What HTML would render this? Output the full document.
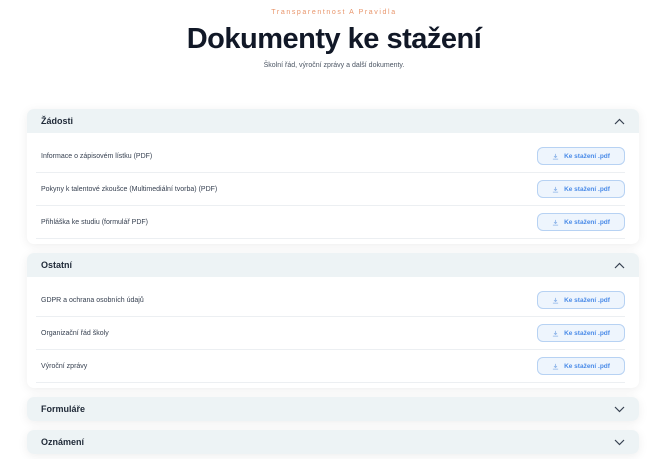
<!DOCTYPE html>
<html><head><meta charset="utf-8"><style>
*{margin:0;padding:0;box-sizing:border-box}
body{width:668px;height:459px;background:#fff;font-family:"Liberation Sans",sans-serif;position:relative;overflow:hidden;color:#1f2937}
.top{position:absolute;top:9px;width:100%;text-align:center;font-size:7px;letter-spacing:1.6px;color:#e8956b}
h1{position:absolute;top:23px;width:100%;text-align:center;font-size:29px;font-weight:bold;color:#111827;letter-spacing:-0.5px}
.sub{position:absolute;top:62px;width:100%;text-align:center;font-size:7px;color:#4b5563}
.card{position:absolute;left:27px;width:612px;border-radius:7px;background:#fff;box-shadow:0 2px 10px rgba(0,0,0,0.07);overflow:hidden}
.hd{height:24px;background:#edf3f5;display:flex;align-items:center;justify-content:space-between;padding:0 14px 0 14px;font-size:9px;font-weight:bold;color:#1f2937}
.hd svg{width:11px;height:7px}
.body{padding:7px 14px 6px 9px}
.row{height:33px;border-bottom:1px solid #eceff2;display:flex;align-items:center;justify-content:space-between;padding-left:5px;font-size:7px;color:#374151}
.btn{width:88px;height:18px;border:1px solid #b7d2f3;background:#eef5fd;border-radius:6px;display:flex;align-items:center;justify-content:center;font-size:6.5px;font-weight:bold;color:#4a8be8;margin-right:0}
.btn svg{width:7px;height:7px;margin-right:5px}
</style></head><body>
<div class="top">Transparentnost A Pravidla</div>
<h1>Dokumenty ke stažení</h1>
<div class="sub">Školní řád, výroční zprávy a další dokumenty.</div>

<div class="card" style="top:109px;height:135px">
<div class="hd">Žádosti<svg viewBox="0 0 11 7"><path d="M1 6L5.5 1.5L10 6" fill="none" stroke="#374151" stroke-width="1.2"/></svg></div>
<div class="body">
<div class="row">Informace o zápisovém lístku (PDF)<span class="btn"><svg viewBox="0 0 8 8"><path d="M4 1v4M2.3 3.5L4 5.2 5.7 3.5M1 7h6" fill="none" stroke="#8bb3e8" stroke-width="0.9"/></svg>Ke stažení .pdf</span></div>
<div class="row">Pokyny k talentové zkoušce (Multimediální tvorba) (PDF)<span class="btn"><svg viewBox="0 0 8 8"><path d="M4 1v4M2.3 3.5L4 5.2 5.7 3.5M1 7h6" fill="none" stroke="#8bb3e8" stroke-width="0.9"/></svg>Ke stažení .pdf</span></div>
<div class="row">Přihláška ke studiu (formulář PDF)<span class="btn"><svg viewBox="0 0 8 8"><path d="M4 1v4M2.3 3.5L4 5.2 5.7 3.5M1 7h6" fill="none" stroke="#8bb3e8" stroke-width="0.9"/></svg>Ke stažení .pdf</span></div>
</div></div>

<div class="card" style="top:253px;height:135px">
<div class="hd">Ostatní<svg viewBox="0 0 11 7"><path d="M1 6L5.5 1.5L10 6" fill="none" stroke="#374151" stroke-width="1.2"/></svg></div>
<div class="body">
<div class="row">GDPR a ochrana osobních údajů<span class="btn"><svg viewBox="0 0 8 8"><path d="M4 1v4M2.3 3.5L4 5.2 5.7 3.5M1 7h6" fill="none" stroke="#8bb3e8" stroke-width="0.9"/></svg>Ke stažení .pdf</span></div>
<div class="row">Organizační řád školy<span class="btn"><svg viewBox="0 0 8 8"><path d="M4 1v4M2.3 3.5L4 5.2 5.7 3.5M1 7h6" fill="none" stroke="#8bb3e8" stroke-width="0.9"/></svg>Ke stažení .pdf</span></div>
<div class="row">Výroční zprávy<span class="btn"><svg viewBox="0 0 8 8"><path d="M4 1v4M2.3 3.5L4 5.2 5.7 3.5M1 7h6" fill="none" stroke="#8bb3e8" stroke-width="0.9"/></svg>Ke stažení .pdf</span></div>
</div></div>

<div class="card" style="top:397px;height:24px">
<div class="hd">Formuláře<svg viewBox="0 0 11 7"><path d="M1 1L5.5 5.5L10 1" fill="none" stroke="#374151" stroke-width="1.2"/></svg></div></div>
<div class="card" style="top:430px;height:24px">
<div class="hd">Oznámení<svg viewBox="0 0 11 7"><path d="M1 1L5.5 5.5L10 1" fill="none" stroke="#374151" stroke-width="1.2"/></svg></div></div>
</body></html>
